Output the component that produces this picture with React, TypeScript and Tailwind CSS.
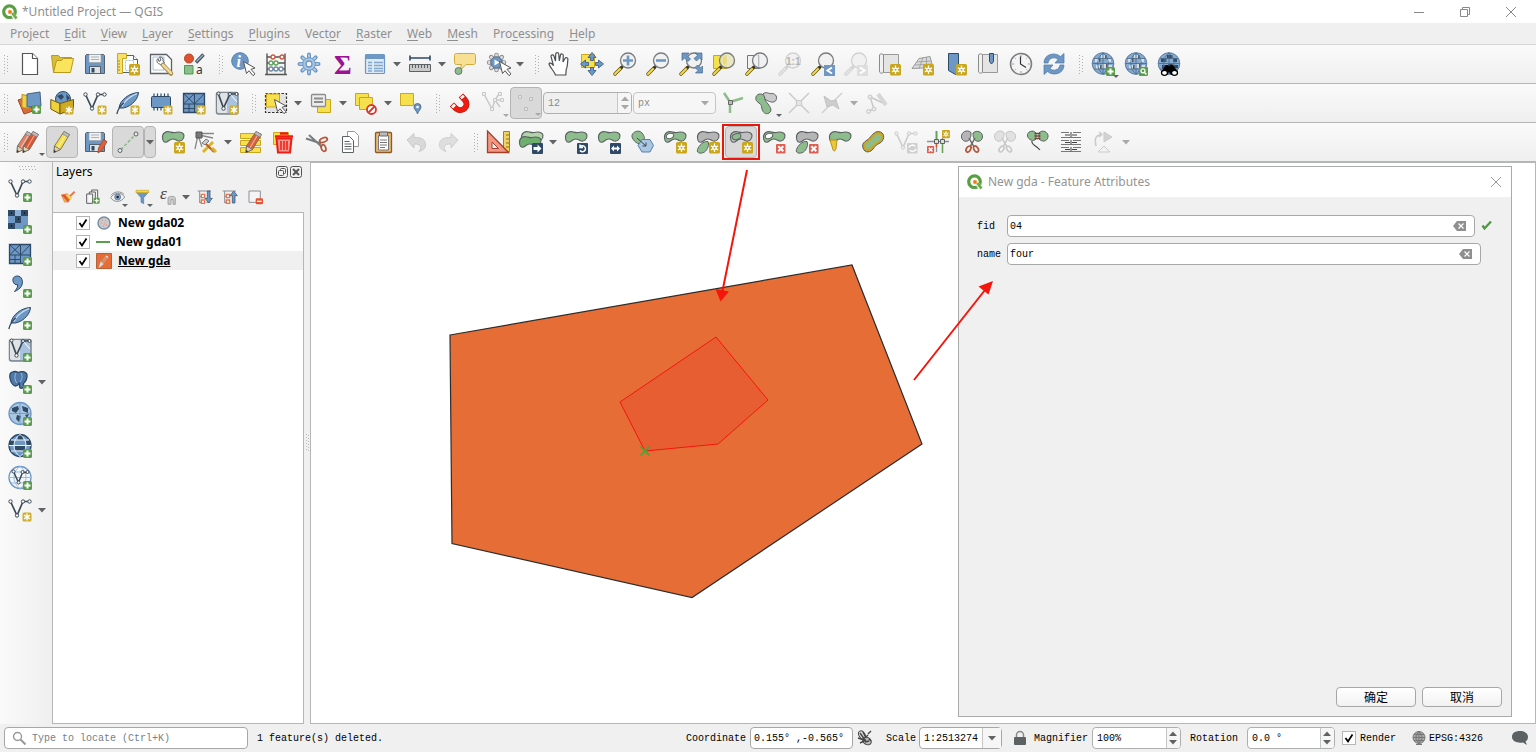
import React, { ReactNode } from "react";

/* ---------- shared icon parts ---------- */

const GREEN = "#8dbd8c";
const GREY = "#d2d2d2";
const LINE = "#5c6164";
const BLUE = "#6d97c4";
const NAVY = "#2f4a66";

const Star = ({ x = 13, y = 12 }: { x?: number; y?: number }) => (
  <g transform={`translate(${x} ${y})`}>
    <rect width="11" height="11.5" rx="1.5" fill="#c9a61c" />
    <path d="M5.5 1.6v8.3M1.9 3.7l7.2 4.2M9.1 3.7L1.9 7.9" stroke="#fff" strokeWidth="1.3" />
    <circle cx="5.5" cy="5.8" r="2.2" fill="#fff" />
    <circle cx="5.5" cy="5.8" r="1" fill="#c9a61c" />
  </g>
);

const Snow = ({ x = 14.5, y = 14.5 }: { x?: number; y?: number }) => (
  <g transform={`translate(${x} ${y})`}>
    <rect width="9" height="9" rx="1.5" fill="#cfae2c" />
    <path d="M4.5 1v7M1.5 2.7l6 3.6M7.5 2.7l-6 3.6" stroke="#fff" strokeWidth="1.4" />
  </g>
);

const Plus = ({ x = 15, y = 15 }: { x?: number; y?: number }) => (
  <g transform={`translate(${x} ${y})`}>
    <rect width="9" height="9" rx="1.5" fill="#5a9e4b" />
    <path d="M4.5 1.5v6M1.5 4.5h6" stroke="#fff" strokeWidth="2" />
  </g>
);

const RedX = ({ x = 14, y = 14 }: { x?: number; y?: number }) => (
  <g transform={`translate(${x} ${y})`}>
    <rect width="9.5" height="9.5" rx="1" fill="#dc5f52" />
    <path d="M2.3 2.3l5 5M7.3 2.3l-5 5" stroke="#fff" strokeWidth="2" />
  </g>
);

const Dark = ({ children }: { children: ReactNode }) => (
  <g transform="translate(13 13)">
    <rect width="11" height="11" rx="1" fill={NAVY} />
    {children}
  </g>
);

const Cursor = ({ x = 11, y = 9 }: { x?: number; y?: number }) => (
  <path
    transform={`translate(${x} ${y})`}
    d="M.5.5l3 12 2.5-2.8 4 5 2-1.800-4-4.600 4-1.300z"
    fill="#fff"
    stroke="#555"
    strokeWidth="1"
  />
);

const Blob = ({ fill = GREEN, stroke = LINE }: { fill?: string; stroke?: string }) => (
  <path
    d="M1.500 8C1 3 5 1 8.500 1.800c2 .5 3.500 1.200 5.500.7 3-.8 8.500-.8 9 3 .3 4-3.500 6.500-6.500 5.200-2.500-1.200-3.500-2.200-6-1.500-2.500.5-3.500 3-6 3C2.500 12.200 1.700 10 1.500 8z"
    fill={fill}
    stroke={stroke}
    strokeWidth="1.100"
  />
);

const Leaf = ({ fill = GREEN }: { fill?: string }) => (
  <path d="M12 11.500c1.500 3-.500 8.500-3.500 10.500s-8.500 1.500-7-2.500 5.500-8.500 10.500-8z" fill={fill} stroke={LINE} />
);

const Lens = ({ muted = false, glass = "#eef0ee" }: { muted?: boolean; glass?: string }) => (
  <g>
    <path d="M2 22l6-6" stroke={muted ? GREY : "#6b5c20"} strokeWidth="3.600" strokeLinecap="round" />
    <path d="M2 22l5-5" stroke={muted ? "#e2e2e2" : "#f3da4a"} strokeWidth="2" strokeLinecap="round" />
    <path d="M8 16l2-2" stroke={muted ? GREY : "#333"} strokeWidth="2.600" />
    <circle cx="15" cy="8.500" r="7.500" fill={glass} fillOpacity="0.85" stroke={muted ? GREY : "#777c7f"} strokeWidth="1.300" />
  </g>
);

const Pencil = ({ fill = "#d9603b", dx = 0 }: { fill?: string; dx?: number }) => (
  <g transform={`translate(${dx} 0)`}>
    <path d="M14 1.500l5.500 3-9 15L4 22.500l.500-6.500z" fill={fill} stroke="#7d6a55" strokeWidth=".9" />
    <path d="M16.500 3.500l-9 15" stroke="#fff" strokeOpacity=".45" strokeWidth="1.300" />
    <path d="M14 1.500l5.500 3-1.500 2.600-5.500-3z" fill="#b9bdc0" stroke="#777" strokeWidth=".6" />
    <path d="M4.500 16l6 3.500L4 22.500z" fill="#e3d3b0" stroke="#666" strokeWidth=".8" />
    <path d="M4.200 20l2 1.200-2.400 1.600z" fill="#333" />
  </g>
);

const Floppy = () => (
  <g>
    <path d="M3.500 2.500h17l1 1v18h-19v-18z" fill={BLUE} stroke="#56606b" />
    <path d="M6 2.500h12v8H6z" fill="#f2f2f2" stroke="#9aa3ab" strokeWidth=".7" />
    <path d="M8 5h8M8 7.500h8" stroke="#a9b0b5" />
    <path d="M6.500 14.500h11v7h-11z" fill="#dfe3e6" stroke="#56606b" />
    <path d="M8.500 16h3v4.500h-3z" fill={NAVY} />
  </g>
);

const VNodes = ({ color = "#3c4a57", fill = "#fff" }: { color?: string; fill?: string }) => (
  <g stroke={color} fill={fill}>
    <path d="M2.500 3.500l6.500 14 6-14h7" fill="none" strokeWidth="1.700" />
    <circle cx="2.500" cy="3.500" r="1.700" />
    <circle cx="9" cy="17.500" r="1.700" />
    <circle cx="15" cy="3.500" r="1.700" />
    <circle cx="21.500" cy="3.500" r="1.700" />
  </g>
);

const Feather = () => (
  <g>
    <path d="M3 17C4 9 13 2 22.500 1.500c0 5-5.500 13.500-15 15.500z" fill={BLUE} stroke={NAVY} />
    <path d="M6 15.500C9 9 15 5 21 2.500" stroke="#cfe0f0" strokeWidth="1.300" fill="none" />
    <path d="M.8 23c1-4 3-8 7-11" stroke={NAVY} strokeWidth="1.300" fill="none" />
  </g>
);

const Mesh = () => (
  <g>
    <path d="M1.500 2.500h21v19h-21z" fill={BLUE} stroke={NAVY} strokeWidth="1.300" />
    <path d="M12.500 2.500v19M1.500 13h21M12.500 13l10-10.500M1.500 2.500l11 10.500M12.500 2.500L1.500 13M1.500 17.500h11M7 13v8.500" stroke={NAVY} strokeWidth="1" fill="none" />
  </g>
);

const VTile = () => (
  <g>
    <rect x="1.500" y="1.500" width="21.500" height="21.500" rx="2" fill="#a9c3df" stroke="#7e868c" strokeWidth="1.500" />
    <path d="M2 2h10v20H4c-1 0-2-1-2-2z" fill="#dfe3e6" />
    <path d="M3 2l5.500 15L15 3h7" stroke="#3c4a57" strokeWidth="1.700" fill="none" />
    <path d="M15 3l7 8" stroke="#fff" strokeWidth="1" />
    <g fill="#fff" stroke="#3c4a57"><circle cx="3.500" cy="2.500" r="1.500" /><circle cx="8.500" cy="17.500" r="1.700" /><circle cx="15" cy="3" r="1.500" /><circle cx="21.500" cy="3" r="1.500" /></g>
  </g>
);

const Globe = ({ land = "#d9dcdf" }: { land?: string }) => (
  <g>
    <circle cx="12" cy="11.500" r="10.800" fill="#85aad2" stroke="#5f7f9f" />
    <path d="M4 6h4v4H4zM10 3h4v4h-4zM16 6h4v4h-4zM5 13h4v4H5zM11 12h4v4h-4zM17 13h4v3h-4z" fill={land} />
    <path d="M8 6h1.500v4H8zM14 3h1.500v4H14zM9 13h1.500v4H9zM15 12h1.500v4H15z" fill="#555d66" />
    <path d="M1.500 11.500h21M3 6.500h18M3 17h18M12 .8v21.400M12 .8C5 6 5 17 12 22.200M12 .8c7 5.200 7 16.200 0 21.400" fill="none" stroke="#4f6f90" strokeWidth=".9" />
  </g>
);

const Hatch = ({ x = 1, y = 1 }: { x?: number; y?: number }) => (
  <path transform={`translate(${x} ${y})`} d="M0 0h13v12H0z" fill="#f7e04e" stroke="#c9a61c" />
);

/* ---------- icons, drawn on a 24-unit grid ---------- */

const icons: Record<string, ReactNode> = {
  new: (
    <g fill="#fff" stroke="#555" strokeWidth="1.200">
      <path d="M5.500 1.500h10l5 5v16h-15z" />
      <path d="M15.500 1.500v5h5" />
    </g>
  ),
  open: (
    <g stroke="#b99a1b">
      <path d="M1.500 3.500h7l2 2h11v5h-14l-4 10z" fill="#d9bd3a" />
      <path d="M6.500 8.500h5l2-2h10l-3 14h-17z" fill="#f9e45b" />
    </g>
  ),
  save: <Floppy />,
  layout: (
    <g>
      <path d="M3.500 3.500h14l4 4v13h-18z" fill="#fff" stroke={LINE} />
      <path d="M17.500 3.500v4h4" fill="#fff" stroke={LINE} />
      <path d="M1.500 1.500h9v5h-4v15h-5z" fill="#f7df6a" stroke="#c9a61c" />
      <path d="M2 9h2M2 12h2M2 15h2M2 18h2" stroke="#8d6a17" strokeWidth=".8" />
      <path d="M9.500 8.500h8v10h-8z" fill="#fff" stroke="#a9c0da" strokeDasharray="2 1" />
      <Star />
    </g>
  ),
  layoutManager: (
    <g>
      <path d="M1.500 2.500h16l5 5v14h-21z" fill="#fff" stroke={LINE} strokeWidth="1.300" />
      <path d="M4 5h11v13H4z" fill="none" stroke="#a9c0da" />
      <path d="M9 6.500c-2 2-1 5 1.500 5.500l2 1.500 3-2.500-1.500-2c.5-2.500-1-4.500-3.500-4l1.500 3-2 1.500z" fill="#fff" stroke={LINE} />
      <path d="M14 13l8 8.500" stroke="#a98b4a" strokeWidth="4.500" strokeLinecap="round" />
      <path d="M14 13l8 8" stroke="#ecd9a0" strokeWidth="2.500" strokeLinecap="round" />
    </g>
  ),
  style: (
    <g>
      <circle cx="7" cy="6.500" r="4.500" fill="#e0522d" stroke="#b04428" />
      <path d="M14 10.500l7.500-8" stroke="#46525e" strokeWidth="3.500" />
      <path d="M14.500 9.500l6.500-6.500" stroke="#9ab4cf" strokeWidth="1.200" />
      <path d="M2.500 13.500h8.500v8.500H2.500z" fill={GREEN} stroke="#4c9a4b" />
      <text x="14" y="22" fontSize="12" fontFamily="Noto Sans" fill="#333">a</text>
    </g>
  ),
  identify: (
    <g>
      <circle cx="9" cy="9" r="8.300" fill={BLUE} stroke="#5680ad" />
      <text x="5.500" y="14.500" fontSize="16" fontStyle="italic" fontWeight="bold" fontFamily="Liberation Serif" fill="#fff">i</text>
      <Cursor x={12} y={9} />
    </g>
  ),
  abacus: (
    <g fill="none">
      <path d="M3 1.500v21M21 1.500v21M1 22.500h22M3 5h18M3 11h18M3 17h18" stroke="#555" strokeWidth="1.400" />
      <g fill="#fff" strokeWidth="1.300">
        <g stroke="#d2553a"><circle cx="9" cy="5" r="2" /><circle cx="18" cy="5" r="2" /></g>
        <g stroke="#60a45a"><circle cx="7" cy="11" r="2" /><circle cx="12" cy="11" r="2" /></g>
        <g stroke="#7088a0"><circle cx="7" cy="17" r="2" /><circle cx="12" cy="17" r="2" /><circle cx="17" cy="17" r="2" /></g>
      </g>
    </g>
  ),
  gear: (
    <g>
      <g stroke="#6d97c4" strokeWidth="4" strokeLinecap="round">
        <path d="M12 2.500v19M2.500 12h19M5.300 5.300l13.400 13.400M18.700 5.300L5.300 18.700" />
      </g>
      <g stroke="#a9c6e3" strokeWidth="2" strokeLinecap="round">
        <path d="M12 3v18M3 12h18M5.800 5.800l12.400 12.400M18.200 5.800L5.800 18.200" />
      </g>
      <circle cx="12" cy="12" r="6.300" fill="#a9c6e3" stroke={BLUE} />
      <circle cx="12" cy="12" r="3" fill="#f5f5f5" stroke={BLUE} strokeWidth="1.300" />
    </g>
  ),
  sigma: (
    <text x="4" y="21.500" fontSize="27" fontWeight="bold" fontFamily="Liberation Serif" fill="#9b1292">Σ</text>
  ),
  table: (
    <g>
      <rect x="2.500" y="2.500" width="19" height="19" rx="1" fill="#dce9f6" stroke={BLUE} strokeWidth="1.200" />
      <path d="M3 3h18v4H3z" fill={BLUE} />
      <path d="M5 10.500h4M5 13.500h4M5 16.500h4M5 19h4M11 10.500h9M11 13.500h9M11 16.500h9M11 19h9" stroke="#85a8cf" strokeWidth="1.300" />
    </g>
  ),
  measure: (
    <g>
      <path d="M2 6h20M2 3.500v5M22 3.500v5" stroke={NAVY} strokeWidth="1.600" />
      <path d="M1.500 12.500h21v7h-21z" fill="#c9c9c9" stroke={LINE} />
      <path d="M4.500 13v3M7.500 13v3M10.500 13v3M13.500 13v3M16.500 13v3M19.500 13v3" stroke={LINE} />
    </g>
  ),
  tip: (
    <g>
      <path d="M3.500 1.500h17c1.500 0 2 1 2 2v7c0 1-.5 2-2 2H13l-6 6 1.500-6h-5c-1.500 0-2-1-2-2v-7c0-1 .5-2 2-2z" fill="#f7df93" stroke="#d0a93c" />
      <circle cx="5.500" cy="19" r="3.500" fill={GREEN} stroke={LINE} strokeWidth=".8" />
    </g>
  ),
  action: (
    <g>
      <g stroke="#888" strokeWidth="4.500" strokeLinecap="round">
        <path d="M10.500 3v15M3 10.500h15M5.200 5.200l10.600 10.600M15.800 5.200L5.200 15.800" />
      </g>
      <g stroke="#dcdcdc" strokeWidth="2.800" strokeLinecap="round">
        <path d="M10.500 3v15M3 10.500h15M5.200 5.200l10.600 10.600M15.800 5.200L5.200 15.800" />
      </g>
      <circle cx="10.500" cy="10.500" r="5.800" fill={BLUE} stroke="#5b6b7a" />
      <path d="M8.500 7.500l5 3-5 3z" fill="#fff" />
      <Cursor x={13} y={9} />
    </g>
  ),
  pan: (
    <path
      d="M8.500 23C7.500 19.500 3 15.500 2 12c.5-1.800 2.500-1 4.500 1.700L4 4.500C3.800 2.700 6.200 2.300 6.900 4l1.600 5L8.700 2c.3-1.800 2.700-1.800 3 0l.6 6.800L13.500 3c.6-1.700 2.800-1.200 2.800.6L16 10l2-3.500c1-1.600 3.200-.8 2.900 1-.7 4 .1 6.500-1.700 10l-.4 5.500z"
      fill="#fff"
      stroke="#4a4f52"
      strokeWidth="1.200"
    />
  ),
  panSel: (
    <g>
      <path d="M1.500 2.500h13v13h-13z" fill="#f7e04e" stroke="#c9a61c" />
      <path d="M12 .5l4 5h-2.500v3h-3v-3H8zM12 23.500l4-5h-2.500v-3h-3v3H8zM.5 12l5-4v2.500h3v3h-3V16zM23.500 12l-5-4v2.500h-3v3h3V16z" fill={BLUE} stroke="#3e628a" strokeWidth=".9" />
    </g>
  ),
  zoomIn: <g><Lens /><path d="M15 3.500v10M10 8.500h10" stroke={BLUE} strokeWidth="2.600" /></g>,
  zoomOut: <g><Lens /><path d="M10 8.500h10" stroke={BLUE} strokeWidth="2.600" /></g>,
  zoomFull: (
    <g>
      <Lens />
      <path d="M3 1h7L8 3.500l3.500 3.500L9 9.500 5.500 6 3 8.500zM23 1v7l-2.500-2L17.500 9 15 6.500 18.500 3.500 16 1zM23.500 21h-7l2.500-2.500-3-3 2.500-2.500 3 3L23.500 14z" fill={BLUE} stroke="#47698e" strokeWidth=".7" />
    </g>
  ),
  zoomSel: (
    <g>
      <path d="M1.500 3.500h13v13h-13z" fill="#f7e04e" stroke="#c9a61c" />
      <Lens glass="#e9e4b8" />
      <path d="M11 5h3v7h-3z" fill="#f1dc62" />
    </g>
  ),
  zoomLayer: (
    <g>
      <path d="M2.500 3.500h12v13h-12z" fill="#f2f2f2" stroke="#777" />
      <Lens />
      <path d="M13.500 2.500v12" stroke="#b5b8ba" />
    </g>
  ),
  zoomNative: (
    <g>
      <Lens muted />
      <text x="8" y="12.500" fontSize="10" fontWeight="bold" fontFamily="Liberation Sans" fill="#b4b4b4">1:1</text>
    </g>
  ),
  zoomLast: (
    <g>
      <Lens />
      <path d="M13 13h11v11H13z" fill={BLUE} />
      <path d="M21 15.500l-4.500 3 4.500 3" stroke="#fff" strokeWidth="2" fill="none" />
    </g>
  ),
  zoomNext: (
    <g>
      <Lens muted />
      <path d="M13 13h11v11H13z" fill="#dedede" />
      <path d="M16 15.500l4.500 3-4.500 3" stroke="#fff" strokeWidth="2" fill="none" />
    </g>
  ),
  newMap: (
    <g>
      <path d="M6.500 2.500h15v18h-15z" fill="#e4e4e4" stroke="#999" />
      <path d="M2.500 3c0-1.500 4-1.500 4 0v16c0 3-4 3-4 0z" fill="#f1f1f1" stroke="#8b8b8b" />
      <Star />
    </g>
  ),
  new3d: (
    <g stroke="#999">
      <path d="M9 6.500l11-2 3 11-21 1z" fill="#dadada" />
      <path d="M7 10l14-1M5 13l17-1M13 5.500l-4 11M16.500 5v11" fill="none" strokeWidth=".8" />
      <g stroke="none"><Star /></g>
    </g>
  ),
  bookmarkNew: (
    <g>
      <path d="M5.500 1.500h10v19l-3 2-7-4z" fill={BLUE} stroke={NAVY} />
      <Star />
    </g>
  ),
  bookmarks: (
    <g>
      <path d="M6.500 2.500h15v18h-15z" fill="#e4e4e4" stroke="#999" />
      <path d="M2.500 3c0-1.500 4-1.500 4 0v16c0 3-4 3-4 0z" fill="#f1f1f1" stroke="#8b8b8b" />
      <path d="M13.500 1.500h4v8l-2 2.500-2-2.500z" fill={BLUE} stroke={NAVY} />
    </g>
  ),
  clock: (
    <g>
      <circle cx="12" cy="12" r="10.500" fill="#f4f4f4" stroke="#777c7f" strokeWidth="1.500" />
      <path d="M12 3v2M12 19v2M3 12h2M19 12h2M5.600 5.600l1 1M18.400 5.600l-1 1M5.600 18.400l1-1M18.400 18.400l-1-1" stroke="#999" />
      <path d="M11.500 4.500V12l5.500 3.500" stroke="#333" strokeWidth="1.200" fill="none" />
    </g>
  ),
  refresh: (
    <g fill={BLUE} stroke="#4f79a8" strokeWidth=".7">
      <path d="M2 11C2 2 13-.5 18.500 4.500L22 1.500V11h-9l3-3.500c-3-3-9-2-10 3.500z" />
      <path d="M22 13c0 9-11 11.500-16.500 6.500L2 22.500V13h9l-3 3.500c3 3 9 2 10-3.500z" />
    </g>
  ),
  globeAdd: <g><Globe /><Plus /></g>,
  globeSearch: (
    <g>
      <Globe />
      <rect x="15" y="15" width="9" height="9" rx="1" fill="#5a9e4b" />
      <circle cx="19" cy="18.800" r="2" fill="none" stroke="#fff" strokeWidth="1.200" />
      <path d="M20.500 20.500l2 2" stroke="#fff" strokeWidth="1.500" />
    </g>
  ),
  globeFind: (
    <g>
      <Globe land="#2f4a66" />
      <path d="M4 20l5-7h2l1 1.500 1-1.500h3l5 7-3 3h-4l-2-3-2 3H6z" fill="#000" />
      <ellipse cx="7.500" cy="20.800" rx="3" ry="2.500" fill="#fff" stroke="#000" strokeWidth="1.300" />
      <ellipse cx="17.500" cy="20.800" rx="3" ry="2.500" fill="#fff" stroke="#000" strokeWidth="1.300" />
    </g>
  ),

  /* data sources and selection */
  dataSource: (
    <g>
      <path d="M1 9l9-3 6 14-9 3z" fill="#dc6a3d" stroke="#a24a26" />
      <path d="M5 3.500l10 2-3 12-7-1z" fill="#f1cf44" stroke="#b9901b" />
      <path d="M10 3l13-2 1 14-14 1z" fill={BLUE} stroke="#47627e" />
      <Plus x={15} y={14} />
    </g>
  ),
  geopackage: (
    <g>
      <circle cx="13" cy="8" r="7.500" fill={BLUE} stroke={NAVY} />
      <path d="M7 5l5-2 2 3-3 3zM16 3l4 4-3 3z" fill={NAVY} />
      <path d="M.8 8.500L10 12.500v10.500L.8 18z" fill="#f0d23c" stroke="#6e5a12" />
      <path d="M10 12.500l13.500-4V18L10 23z" fill="#cfa920" stroke="#6e5a12" />
      <Snow />
    </g>
  ),
  shapefile: <g><VNodes /><Snow /></g>,
  spatialite: <g><Feather /><Snow /></g>,
  memory: (
    <g>
      <path d="M5 2.500v17M8.500 2.500v17M12 2.500v17M15.500 2.500v17M19 2.500v17" stroke={NAVY} strokeWidth="1.200" />
      <rect x="2.500" y="5.500" width="19" height="11" rx="1" fill={BLUE} stroke={NAVY} />
      <Snow />
    </g>
  ),
  mesh: <g><Mesh /><Snow /></g>,
  vtile: <g><VTile /><Snow /></g>,
  select: (
    <g>
      <path d="M1.500 2.500h21v19h-21z" fill="#e3e3e3" stroke="#333" strokeDasharray="2.500 1.500" strokeWidth="1.200" />
      <path d="M2.500 3h13v13h-13z" fill="#f7e04e" stroke="#c9a61c" />
      <Cursor x={10} y={8} />
    </g>
  ),
  selectForm: (
    <g>
      <path d="M8.500 8.500h13v13h-13z" fill="#f7e04e" stroke="#c9a61c" />
      <rect x="2.500" y="3.500" width="14" height="12" rx="1" fill="#ececec" stroke="#8d8d8d" strokeWidth="1.300" />
      <path d="M5 7.500h9M5 11h9" stroke="#8d8d8d" strokeWidth="2" />
    </g>
  ),
  deselect: (
    <g>
      <Hatch x={1.500} y={2.500} />
      <Hatch x={5.500} y={6.500} />
      <circle cx="17.500" cy="18.500" r="4.500" fill="#fff" stroke="#e0342b" strokeWidth="1.800" />
      <path d="M14.500 21.500l6-6" stroke="#e0342b" strokeWidth="1.800" />
    </g>
  ),
  selectLoc: (
    <g>
      <Hatch x={1.500} y={2.500} />
      <path d="M18.500 23c-1-3.500-3.500-4.500-3.500-7a3.500 3.500 0 017 0c0 2.500-2.500 3.500-3.500 7z" fill={BLUE} stroke="#47627e" strokeWidth=".8" />
      <circle cx="18.500" cy="16" r="1.300" fill="#fff" />
    </g>
  ),
  magnet: (
    <g fill="none">
      <path d="M13 4.500l4 4.500c5 6-3 13.500-9 8.500l-4-4" stroke="#a8281c" strokeWidth="6" />
      <path d="M13 4.500l4 4.500c5 6-3 13.500-9 8.500l-4-4" stroke="#f01a10" strokeWidth="4.600" />
      <path d="M13.500 5l1.700 2M4.500 14l2 2" stroke="#fff" strokeWidth="4" />
    </g>
  ),
  snapType: (
    <g stroke="#c8c8c8" fill="#eee">
      <path d="M3 3l8 15 3-9h7M14 9l5 7M14 9l4-6" fill="none" strokeWidth="1.500" />
      <path d="M1.500 1.500h3v3h-3zM9.500 16.500h3v3h-3zM19.500 7.500h3v3h-3zM17.500 1.500h3v3h-3zM12.500 7.500h3v3h-3z" />
    </g>
  ),
  snapVertex: (
    <g stroke="#bdbdbd" fill="#e3e3e3">
      <path d="M4.500 4.500h3v3h-3zM15.500 6.500h3v3h-3zM10.500 16.500h3v3h-3z" />
    </g>
  ),
  topology: (
    <g>
      <path d="M3 2l6 9v11M9 11l13-4" stroke={GREEN} strokeWidth="2.500" fill="none" />
      <path d="M7.500 9.500h4v4h-4z" fill="#bbb" stroke="#666" />
    </g>
  ),
  overlap: (
    <g stroke={LINE}>
      <path d="M9 3c3-3 6 0 8-.5s6 1 5.500 5-4 4-7 3-7-3-6.500-7.500z" fill="#c9c9c9" />
      <path d="M2 6c1-4 8-4 8.500 0s1 4 3.500 7 4.500 7 1 9-6-.5-7-4 0-4-3-6-3.500-3.500-3-6z" fill={GREEN} />
    </g>
  ),
  intersect: (
    <g stroke="#cbcbcb" strokeWidth="1.500" fill="#e5e5e5">
      <path d="M2 2l20 20M22 2L2 22" />
      <path d="M9.500 9.500h5v5h-5z" strokeWidth="1.200" />
    </g>
  ),
  selfSnap: (
    <g>
      <path d="M2 22L22 2" stroke="#cfcfcf" strokeWidth="1.500" />
      <path d="M4 5l7 5 5-1 3 9-6-4-6 2z" fill="#cdcdcd" stroke="#c2c2c2" />
    </g>
  ),
  trace: (
    <g stroke="#c8c8c8" fill="#e9e9e9">
      <path d="M4 20l5-2 -4-12 13 6" fill="none" strokeWidth="1.500" />
      <path d="M13 3l8 11" strokeWidth="4" stroke="#d6d6d6" />
      <circle cx="3.500" cy="20.500" r="2" /><circle cx="9" cy="18" r="2" /><circle cx="5" cy="6" r="2" />
    </g>
  ),

  /* editing */
  edits: <g><Pencil dx={-4} fill="#e0826a" /><Pencil dx={2} fill="#d9552f" /></g>,
  toggleEdit: <Pencil fill="#f3de4c" />,
  saveEdits: (
    <g>
      <Floppy />
      <path d="M20.500 9.500l3.500 2-5 9-4 2.500.5-5z" fill="#e0603b" stroke="#8c4a34" strokeWidth=".8" />
    </g>
  ),
  segment: (
    <g>
      <path d="M5 19.500L19 5" stroke={GREEN} strokeWidth="1.700" strokeDasharray="3 2" />
      <circle cx="4" cy="20.500" r="2" fill="#eee" stroke={LINE} /><circle cx="20" cy="4" r="2" fill="#eee" stroke={LINE} />
    </g>
  ),
  addPolygon: <g><Blob /><Star /></g>,
  vertexTool: (
    <g>
      <path d="M4 5L1 19M4 5l4 12M4 3.500h16M5 5l14 3" stroke="#888" strokeWidth="1.300" fill="none" />
      <path d="M2 2h6v6H2z" fill="#777" stroke="#555" />
      <path d="M19 12L9 22" stroke="#d9b427" strokeWidth="3" />
      <path d="M10 12l10 10" stroke="#c0572e" strokeWidth="2" />
      <path d="M8 13l4-4 3 2-4 4z" fill="#ccc" stroke="#666" strokeWidth=".8" />
      <path d="M18 18l4 4" stroke="#d9b427" strokeWidth="3" />
    </g>
  ),
  modifyAttr: (
    <g>
      <path d="M1.500 3.500h20v5h-20zM1.500 10.500h20v5h-20zM1.500 17.500h20v5h-20z" fill="#f7e04e" stroke="#c9a61c" />
      <Pencil dx={3} />
    </g>
  ),
  trash: (
    <g>
      <path d="M1.500 2.500h15v12h-15z" fill="#f7e04e" stroke="#c9a61c" />
      <path d="M3 6.500h18M8 3.500h8" stroke="#ee1c12" strokeWidth="2.500" />
      <path d="M4.500 8.500h15l-1.500 14H6z" fill="#f59a90" stroke="#ee1c12" strokeWidth="2" />
      <path d="M9 11v9M12 11v9M15 11v9" stroke="#ee1c12" strokeWidth="1.500" />
    </g>
  ),
  cut: (
    <g fill="none">
      <path d="M1 8.500l15 5M4 5l13 12" stroke="#777c7f" strokeWidth="2" />
      <ellipse cx="18.500" cy="10" rx="4" ry="2.200" transform="rotate(-20 18.500 10)" stroke="#b5573a" strokeWidth="1.700" />
      <ellipse cx="18.500" cy="18" rx="2.200" ry="3.500" transform="rotate(-20 18.500 18)" stroke="#b5573a" strokeWidth="1.700" />
    </g>
  ),
  copy: (
    <g fill="#fff" stroke={LINE}>
      <path d="M9.500 1.500h7l4 4v11h-11z" stroke="#999" />
      <path d="M4.500 6.500h7l4 4v12h-11z" />
      <path d="M6.500 11.500h5M6.500 14h7M6.500 16.500h7M6.500 19h7" />
    </g>
  ),
  paste: (
    <g>
      <rect x="4.500" y="2.500" width="16" height="20" rx="1" fill="#e8bb7a" stroke="#8d5a26" strokeWidth="1.300" />
      <path d="M7.500 5.500h10v14.500h-10z" fill="#fff" stroke="#777" />
      <path d="M8.500 2h8v4h-8z" fill="#bbb" stroke="#666" />
      <path d="M9 10h7M9 12.500h7M9 15h7M9 17.500h5" stroke="#777" />
    </g>
  ),
  undo: <path d="M3 10l7-6.500v4c7-.5 12 2 11.500 8-.3 3-2.500 5-6.500 6 4-4.500 1-8-5-7.500v4z" fill="#d9d9d9" stroke="#cacaca" />,
  redo: <path d="M21 10l-7-6.500v4c-7-.5-12 2-11.500 8 .3 3 2.500 5 6.500 6-4-4.500-1-8 5-7.500v4z" fill="#dedede" stroke="#cfcfcf" />,

  /* advanced digitizing */
  advanced: (
    <g>
      <path d="M17.500 1.500h6v20h-6z" fill="#f0d264" stroke="#b07a1b" />
      <path d="M20 5h3M20 9h3M20 13h3M20 17h3" stroke="#8d6a17" />
      <path d="M1.500 1L1.500 22.500h21z" fill="#f39684" stroke="#a0412b" strokeWidth="1.300" />
      <path d="M6 12v6.500h6.500z" fill="#f6f6f6" stroke="#a0412b" />
    </g>
  ),
  move: (
    <g>
      <g transform="translate(1 0)"><Blob fill="#b1d3a8" /></g>
      <g transform="translate(-1 5)"><Blob fill="#6faf6d" /></g>
      <Dark><path d="M1.500 4h4V1.500l4 4-4 4V7h-4z" fill="#fff" /></Dark>
    </g>
  ),
  rotate: <g><Blob /><Dark><path d="M3.500 3.500a3 3 0 11-.5 4M3 1.500v3h3" fill="none" stroke="#fff" strokeWidth="1.500" /></Dark></g>,
  scale: <g><Blob /><Dark><path d="M1 5.500l3-3v2h3v-2l3 3-3 3v-2H4v2z" fill="#fff" /></Dark></g>,
  simplify: (
    <g>
      <path d="M2 7C1 2 9-1 12 3s3 5 1 9-9 1-11-5z" fill={GREEN} stroke={LINE} />
      <path d="M12 9.500h8l3.500 6-3.500 6.500h-8l-4-6.500z" fill="#a9c6e3" stroke="#5680ad" />
      <path d="M7 8l9 8m0-3.500V16h-3.500" stroke="#444" fill="none" />
    </g>
  ),
  addRing: <g><Blob /><ellipse cx="7" cy="6" rx="3.800" ry="2.500" transform="rotate(-20 7 6)" fill="#fff" stroke={LINE} /><Star /></g>,
  addPart: <g><Blob fill="#b5b5b5" /><Leaf /><Star /></g>,
  fillRing: <g><Blob fill="#c0c0c0" /><ellipse cx="7.500" cy="6.500" rx="4.500" ry="3" transform="rotate(-20 7.500 6.500)" fill={GREEN} stroke={LINE} /><Star /></g>,
  deleteRing: <g><Blob /><ellipse cx="7" cy="6" rx="3.800" ry="2.500" transform="rotate(-20 7 6)" fill="#fff" stroke={LINE} /><RedX /></g>,
  deletePart: <g><Blob fill="#b5b5b5" /><Leaf /><RedX /></g>,
  reshape: <g><Blob /><path d="M2 10h7l-1 8c-.5 4-3 4-3.500 0z" fill="#e9c83c" stroke="#b9901b" /></g>,
  offset: (
    <g>
      <path d="M2 18c-2-6 4-7 6.500-10s6-8 11-6 3.500 9-.5 11-5 3-7 6-8 5-10-1z" fill="#cda61d" stroke={LINE} />
      <path d="M4.500 17c-1-4 4-5 6-7.500s5-6.500 8-5 2 5-1 6.500-5 3.500-7 6-5 3-6 0z" fill={GREEN} />
    </g>
  ),
  reverse: (
    <g>
      <VNodes color="#cdcdcd" fill="#eee" />
      <rect x="13" y="13" width="10.500" height="10.500" rx="1" fill="#cfcfcf" />
      <path d="M15 17.500c1-3 5-3 6-1M22 19c-1 3-5 3-6 1" stroke="#fff" strokeWidth="1.500" fill="none" />
    </g>
  ),
  trim: (
    <g>
      <path d="M9.500 1v9" stroke="#60a45a" strokeWidth="2" />
      <path d="M0 11.500h22M9.500 13v9M15.500 8v15" stroke="#85929d" strokeWidth="1.300" />
      <path d="M9.500 13v4" stroke="#d2553a" strokeWidth="1.500" />
      <path d="M15.500 13v10" stroke="#60a45a" strokeWidth="1.300" />
      <path d="M7.500 9.500h4v4h-4zM13.500 9.500h4v4h-4z" fill="#ddd" stroke={LINE} />
      <g transform="translate(15 0) scale(.72)"><Star x={0} y={0} /></g>
      <g transform="translate(0 16) scale(.75)"><RedX x={0} y={0} /></g>
    </g>
  ),
  splitFeat: (
    <g>
      <path d="M11 2.500C7-1 1 2 1.500 7s6 5 7.500 3 2-3 2-7.500z" fill="#b5b5b5" stroke={LINE} />
      <path d="M13 3c4-3.500 10-1 9.500 4s-6 5-7.500 3-2-3-2-7z" fill={GREEN} stroke={LINE} />
      <path d="M9 8l5 9M15 8l-5 9" stroke="#666" strokeWidth="1.500" />
      <ellipse cx="8.500" cy="19" rx="2" ry="3.300" transform="rotate(35 8.500 19)" fill="none" stroke="#b5573a" strokeWidth="1.700" />
      <ellipse cx="16" cy="19" rx="2" ry="3.300" transform="rotate(-35 16 19)" fill="none" stroke="#b5573a" strokeWidth="1.700" />
    </g>
  ),
  splitPart: (
    <g fill="#e1e1e1" stroke="#c6c6c6">
      <path d="M11 2.500C7-1 1 2 1.500 7s6 5 7.500 3 2-3 2-7.500z" />
      <path d="M13 3c4-3.500 10-1 9.500 4s-6 5-7.500 3-2-3-2-7z" />
      <path d="M9 8l5 9M15 8l-5 9" strokeWidth="1.500" />
      <g fill="none" strokeWidth="1.500">
        <ellipse cx="8.500" cy="19" rx="2" ry="3.300" transform="rotate(35 8.500 19)" />
        <ellipse cx="16" cy="19" rx="2" ry="3.300" transform="rotate(-35 16 19)" />
      </g>
    </g>
  ),
  merge: (
    <g>
      <path d="M10 3C7-1 .500 2 1.500 6s6 6 8.500 3z" fill={GREEN} stroke={LINE} />
      <path d="M13 3c3-4 10-1 9 4s-6 5-9 2z" fill={GREEN} stroke={LINE} />
      <path d="M8.500 3.500h6M8.500 6h6M8.500 8.500h6" stroke="#6b4a3a" strokeWidth="1.300" />
      <path d="M6 11c-1 4 4 4 8 9" stroke="#444" strokeWidth="1.200" fill="none" />
    </g>
  ),
  mergeAttr: (
    <g stroke="#777">
      <path d="M2 2.500h8M14 2.500h8M2 7.500h20M2 10.500h8M14 10.500h8M2 14.500h20M2 17.500h8M14 17.500h8M2 21.500h20" strokeWidth="1.200" />
      <path d="M6 5h5M13 5h5M6 12.500h5M13 12.500h5M6 19.500h5M13 19.500h5M12 2v5M12 10v4M12 17v4" stroke="#444" />
    </g>
  ),
  rotateSym: (
    <g stroke="#cbcbcb" fill="#d2d2d2">
      <path d="M12 2v10l8-5z" />
      <path d="M6 22h12l-6-6z" fill="#f2f2f2" />
      <path d="M4 16C2 9 4 5 9 4.500M7 2l3 2.500-3 2.500" fill="none" strokeWidth="1.500" />
    </g>
  ),

  /* layer sources */
  addVector: <g><VNodes /><Plus /></g>,
  addRaster: (
    <g>
      <path d="M0 0h20v19H0z" fill={BLUE} />
      <path d="M0 0h7v6H0zM13 0h7v6h-7zM7 6h6v7H7zM0 13h7v6H0z" fill={NAVY} />
      <path d="M3 3h1M16 3h1M10 9h1M3 16h1" stroke="#111" strokeWidth="1.500" />
      <path d="M7 0h6v6H7z" fill="#8db0d6" />
      <Plus />
    </g>
  ),
  addMesh: <g><Mesh /><Plus /></g>,
  addCsv: (
    <g>
      <path d="M5 7c-1.500-5 7-7.500 9-1.500 1.500 5-1 9.500-7.500 12 2.500-3 3.500-5 3-7-2 .8-4-.8-4.500-3.500z" fill={BLUE} stroke={NAVY} />
      <Plus />
    </g>
  ),
  addSpatialite: <g><Feather /><Plus /></g>,
  addVtile: <g><VTile /><Plus /></g>,
  addPostgis: (
    <g>
      <path d="M2 4c1-3 6-3 8-1.500C13 1 18 1 19 5c.5 4-2 7-3.500 8.500v3.500c-1 2-4 1.500-4-.5v-4c-1 2-2 3.500-4 3.500C3 15 1 8 2 4z" fill="#4e79a8" stroke={NAVY} strokeWidth="1.300" />
      <path d="M8 3c-2 4-1 8 1 10M13 3c2 3 1 6-1 9" fill="none" stroke="#9dbbdc" />
      <Plus />
    </g>
  ),
  addWms: (
    <g>
      <circle cx="12" cy="11.500" r="11" fill="#a9c6e3" stroke={BLUE} strokeWidth="1.300" />
      <path d="M4 6l6-2 1 3-3 4-4-2zM14 4l6 2v5l-5-2zM9 13l4 1-2 6-3-3zM17 13l4-1-2 4z" fill={NAVY} />
      <path d="M1 11.500h22M12 .5v22" stroke={BLUE} strokeWidth=".8" />
      <Plus />
    </g>
  ),
  addWcs: (
    <g>
      <circle cx="12" cy="11.500" r="11" fill={BLUE} stroke={NAVY} strokeWidth="1.300" />
      <path d="M2 6.500h4v5H1zM10 1h5v5h-5zM18 6.500h4l1 5h-5zM7 11.500h10v5H7z" fill={NAVY} />
      <path d="M1 11.500h22M3 6h18M3 17h18M12 .5C4 6 4 17 12 22.500M12 .5c8 5.500 8 16.500 0 22" stroke="#eef4fa" strokeWidth="1" fill="none" />
      <Plus />
    </g>
  ),
  addWfs: (
    <g>
      <circle cx="12" cy="11.500" r="11" fill="#f2f7fc" stroke={BLUE} strokeWidth="1.300" />
      <path d="M1 11.500h22M3 6h18M3 17h18M12 .5C4 6 4 17 12 22.500M12 .5c8 5.500 8 16.500 0 22" stroke="#9dbbdc" strokeWidth="1" fill="none" />
      <path d="M5.500 5.500l5 11 4-10h5" fill="none" stroke="#3c4a57" strokeWidth="1.500" />
      <g fill="#fff" stroke="#3c4a57"><circle cx="5.500" cy="5.500" r="1.500" /><circle cx="10.500" cy="16.500" r="1.500" /><circle cx="14.500" cy="6" r="1.500" /><circle cx="19.500" cy="6" r="1.500" /></g>
      <Plus />
    </g>
  ),

  /* layer panel */
  brush: (
    <g>
      <path d="M2 9l9-2 6 6-5 7-3-1-2 1z" fill="#f0b93a" stroke="#e8744f" />
      <path d="M2 9l5-1 7 8-2 4z" fill="#e0563a" />
      <path d="M13 13l9-9" stroke="#e8744f" strokeWidth="3" />
      <path d="M11 9l6 6" stroke="#f6dc5c" strokeWidth="3" />
    </g>
  ),
  addGroup: (
    <g fill="#f4f4f4" stroke={LINE} strokeWidth="1.500">
      <path d="M10 1.500h9v15h-9z" /><path d="M6.500 4.500h9v15h-9z" /><path d="M2.500 7.500h9v14h-9z" />
      <g stroke="none"><Plus x={13} y={13} /></g>
    </g>
  ),
  eye: (
    <g>
      <path d="M1 13C6 5 17 4 22 12c-5 8-16 9-21 1z" fill="#f4f4f4" stroke="#8a9094" strokeWidth="1.500" />
      <path d="M2 9c5-6 14-6 19-1" fill="none" stroke="#8a9094" strokeWidth="1.500" />
      <circle cx="11.500" cy="12" r="4.500" fill="#7fa3cb" stroke="#5b6b7a" /><circle cx="11.500" cy="12" r="1.800" fill="#222" />
    </g>
  ),
  filter: (
    <g>
      <path d="M2 5h18l-7 8v9l-4-2v-7z" fill={BLUE} stroke="#4f79a8" />
      <path d="M1.500 2h19v3.500h-19z" fill="#f7d83c" stroke="#c9a61c" />
    </g>
  ),
  epsilon: (
    <g>
      <text x="0" y="15" fontSize="26" fontStyle="italic" fontFamily="Liberation Serif" fill="#444">ε</text>
      <path d="M12 23v-9c0-4 11-4 11 0v9h-3.500v-7h-3v7z" fill="#ccc" stroke="#888" />
    </g>
  ),
  expand: (
    <g>
      <path d="M1 3h20M4 3v18M4 11h5M4 20h5M14 20h6" stroke="#8a9094" strokeWidth="1.500" fill="none" />
      <path d="M6.500 8h5v5h-5zM6.500 16.500h5v5h-5z" fill="#fff" stroke="#e8744f" strokeWidth="2" />
      <path d="M15.500 3h4v11h3.500l-5.500 7-5.500-7h3.500z" fill={BLUE} stroke={NAVY} />
    </g>
  ),
  collapse: (
    <g>
      <path d="M1 3h20M4 3v18M4 11h5M4 20h5" stroke="#8a9094" strokeWidth="1.500" fill="none" />
      <path d="M6.500 8h5v5h-5zM6.500 16.500h5v5h-5z" fill="#fff" stroke="#e8744f" strokeWidth="2" />
      <path d="M15.500 21h4V10h3.500l-5.500-7-5.500 7h3.500z" fill={BLUE} stroke={NAVY} />
    </g>
  ),
  removeLayer: (
    <g>
      <path d="M3 3h17v17H3z" fill="#f4f4f4" stroke="#8a9094" strokeWidth="1.500" />
      <rect x="13" y="14" width="11" height="9" rx="2" fill="#e8512f" /><path d="M15 18.500h7" stroke="#fff" strokeWidth="2" />
    </g>
  ),
};

const Icon = ({ name, small }: { name: string; small?: boolean }) => (
  <svg viewBox="0 0 24 24" className={small ? "h-4 w-4 overflow-visible" : "h-6 w-6 overflow-visible"} fill="none" aria-hidden="true">
    {icons[name]}
  </svg>
);

const Logo = () => (
  <svg viewBox="0 0 16 16" className="h-4 w-4 shrink-0" fill="none" aria-hidden="true">
    <circle cx="7.500" cy="7.700" r="5.800" stroke="#589f44" strokeWidth="3.200" />
    <path d="M8 9.500l3-1.500 4.500 5-1.500 2.500h-2.500z" fill="#f6f6f6" />
    <path d="M9 9.500l2.500-1 4 5-2 2z" fill="#6dae45" />
    <circle cx="8" cy="8" r="2.300" fill="#f3b05c" />
    <circle cx="8" cy="8" r="1.400" fill="#ee7913" />
  </svg>
);

/* ---------- controls ---------- */

const Caret = ({ muted = false }: { muted?: boolean }) => (
  <svg viewBox="0 0 8 5" className="h-[5px] w-2" aria-hidden="true">
    <path d="M0 0h8L4 4.500z" fill={muted ? "#a8a8a8" : "#606366"} />
  </svg>
);

type ToolProps = { icon: string; label: string; menu?: boolean; corner?: boolean; pressed?: boolean; muted?: boolean; marked?: boolean };

const Tool = ({ icon, label, menu, corner, pressed, muted, marked }: ToolProps) => (
  <div className="relative flex h-8 shrink-0">
    <button
      type="button"
      aria-label={label}
      disabled={muted}
      className={`relative flex h-8 w-8 items-center justify-center ${pressed ? "rounded-sm border border-[#b4b4b4] bg-[#d9d9d9]" : ""}`}
    >
      <Icon name={icon} />
      {corner && (
        <svg viewBox="0 0 6 3" className="absolute right-0 bottom-0.5 h-[3px] w-1.5" aria-hidden="true">
          <path d="M0 0h6L3 3z" fill={muted ? "#a8a8a8" : "#606366"} />
        </svg>
      )}
    </button>
    {menu && (
      <button
        type="button"
        aria-label={`${label} options`}
        className={`flex h-8 w-3 items-center justify-center ${pressed ? "rounded-sm border border-[#b4b4b4] bg-[#d9d9d9]" : ""}`}
      >
        <Caret muted={muted} />
      </button>
    )}
    {marked && <span className="pointer-events-none absolute -inset-x-[3px] -inset-y-0.5 border-2 border-[#e8190c]" />}
  </div>
);

const Grip = ({ first }: { first?: boolean }) => (
  <div className={`flex h-5 shrink-0 justify-end ${first ? "w-3 pr-[3px]" : "w-[15px] pr-0.5"}`}>
    <svg viewBox="0 0 5 20" className="h-5 w-[5px]" aria-hidden="true">
      <path d="M.5 1v19M3.500 2v18" stroke="#b0b0b0" strokeDasharray="1 2" />
    </svg>
  </div>
);

const Bar = ({ label, children }: { label: string; children: ReactNode }) => (
  <div
    role="toolbar"
    aria-label={label}
    className="flex h-[39px] shrink-0 items-center gap-px overflow-hidden border-b border-[#b5b7b7] bg-linear-to-b from-[#fafafa] to-[#efefef]"
  >
    {children}
  </div>
);

const Tools = ({ items }: { items: ToolProps[] }) => (
  <>
    {items.map((t) => (
      <Tool key={t.icon} {...t} />
    ))}
  </>
);

const Spin = ({ label, value, width, muted }: { label: string; value: string; width: string; muted?: boolean }) => (
  <div className={`flex h-[22px] shrink-0 overflow-hidden rounded-sm border border-[#aeb0b0] ${width} ${muted ? "bg-[#efefef] text-[#8a8a8a]" : "bg-white"}`}>
    <input aria-label={label} defaultValue={value} disabled={muted} className="w-0 flex-1 bg-transparent px-1 outline-none" />
    <div className="flex w-3.5 flex-col items-center justify-center gap-1 border-l border-[#c4c6c6] bg-[#f6f6f6]">
      <button type="button" aria-label={`Increase ${label}`} className="rotate-180"><Caret muted={muted} /></button>
      <button type="button" aria-label={`Decrease ${label}`}><Caret muted={muted} /></button>
    </div>
  </div>
);

const Check = ({ id }: { id: string }) => (
  <span className="relative flex h-3.5 w-3.5 shrink-0">
    <input id={id} type="checkbox" defaultChecked className="peer h-3.5 w-3.5 appearance-none border border-[#b5b5b5] bg-white" />
    <svg viewBox="0 0 14 14" className="pointer-events-none absolute inset-0 hidden h-3.5 w-3.5 peer-checked:block" fill="none" aria-hidden="true">
      <path d="M3.500 7l2.500 3.500 4.500-7" stroke="#000" strokeWidth="1.800" />
    </svg>
  </span>
);

/* ---------- data ---------- */

const menus: [string, string, string][] = [
  ["Pro", "j", "ect"], ["", "E", "dit"], ["", "V", "iew"], ["", "L", "ayer"], ["", "S", "ettings"], ["", "P", "lugins"],
  ["Vect", "o", "r"], ["", "R", "aster"], ["", "W", "eb"], ["", "M", "esh"], ["Pro", "c", "essing"], ["", "H", "elp"],
];

const fileTools: ToolProps[] = [
  { icon: "new", label: "New project" }, { icon: "open", label: "Open project" }, { icon: "save", label: "Save project" },
  { icon: "layout", label: "New print layout" }, { icon: "layoutManager", label: "Layout manager" }, { icon: "style", label: "Style manager" },
];
const infoTools: ToolProps[] = [
  { icon: "identify", label: "Identify features" }, { icon: "abacus", label: "Field calculator" }, { icon: "gear", label: "Processing toolbox" },
  { icon: "sigma", label: "Statistical summary" }, { icon: "table", label: "Attribute table", menu: true }, { icon: "measure", label: "Measure", menu: true },
  { icon: "tip", label: "Map tips" }, { icon: "action", label: "Run action", menu: true },
];
const navTools: ToolProps[] = [
  { icon: "pan", label: "Pan map" }, { icon: "panSel", label: "Pan to selection" }, { icon: "zoomIn", label: "Zoom in" }, { icon: "zoomOut", label: "Zoom out" },
  { icon: "zoomFull", label: "Zoom full" }, { icon: "zoomSel", label: "Zoom to selection" }, { icon: "zoomLayer", label: "Zoom to layer" },
  { icon: "zoomNative", label: "Zoom to native resolution", muted: true }, { icon: "zoomLast", label: "Zoom last" }, { icon: "zoomNext", label: "Zoom next", muted: true },
  { icon: "newMap", label: "New map view" }, { icon: "new3d", label: "New 3D map view" }, { icon: "bookmarkNew", label: "New bookmark" },
  { icon: "bookmarks", label: "Show bookmarks" }, { icon: "clock", label: "Temporal controller" }, { icon: "refresh", label: "Refresh" },
];
const webTools: ToolProps[] = [
  { icon: "globeAdd", label: "Add web service", corner: true }, { icon: "globeSearch", label: "Search web service" }, { icon: "globeFind", label: "Metasearch" },
];
const sourceTools: ToolProps[] = [
  { icon: "dataSource", label: "Data source manager" }, { icon: "geopackage", label: "New GeoPackage layer" }, { icon: "shapefile", label: "New shapefile layer" },
  { icon: "spatialite", label: "New SpatiaLite layer" }, { icon: "memory", label: "New scratch layer" }, { icon: "mesh", label: "New mesh layer" }, { icon: "vtile", label: "New virtual layer" },
];
const selectTools: ToolProps[] = [
  { icon: "select", label: "Select features", menu: true }, { icon: "selectForm", label: "Select by value", menu: true },
  { icon: "deselect", label: "Deselect features", menu: true }, { icon: "selectLoc", label: "Select by location" },
];
const snapTools: ToolProps[] = [
  { icon: "magnet", label: "Enable snapping" }, { icon: "snapType", label: "Snapping mode", muted: true, corner: true },
  { icon: "snapVertex", label: "Snapping type", muted: true, pressed: true, corner: true },
];
const topoTools: ToolProps[] = [
  { icon: "topology", label: "Topological editing" }, { icon: "overlap", label: "Avoid overlap", corner: true }, { icon: "intersect", label: "Snap on intersection", muted: true },
  { icon: "selfSnap", label: "Self-snapping", muted: true, menu: true }, { icon: "trace", label: "Tracing", muted: true },
];
const editTools: ToolProps[] = [
  { icon: "edits", label: "Current edits", corner: true }, { icon: "toggleEdit", label: "Toggle editing", pressed: true }, { icon: "saveEdits", label: "Save layer edits" },
  { icon: "segment", label: "Digitize with segment", pressed: true, menu: true }, { icon: "addPolygon", label: "Add polygon feature" },
  { icon: "vertexTool", label: "Vertex tool", menu: true }, { icon: "modifyAttr", label: "Modify attributes" }, { icon: "trash", label: "Delete selected" },
  { icon: "cut", label: "Cut features" }, { icon: "copy", label: "Copy features" }, { icon: "paste", label: "Paste features" },
  { icon: "undo", label: "Undo", muted: true }, { icon: "redo", label: "Redo", muted: true },
];
const shapeTools: ToolProps[] = [
  { icon: "advanced", label: "Advanced digitizing" }, { icon: "move", label: "Move feature", menu: true }, { icon: "rotate", label: "Rotate feature" },
  { icon: "scale", label: "Scale feature" }, { icon: "simplify", label: "Simplify feature" }, { icon: "addRing", label: "Add ring" }, { icon: "addPart", label: "Add part" },
  { icon: "fillRing", label: "Fill ring", pressed: true, marked: true }, { icon: "deleteRing", label: "Delete ring" }, { icon: "deletePart", label: "Delete part" },
  { icon: "reshape", label: "Reshape features" }, { icon: "offset", label: "Offset curve" }, { icon: "reverse", label: "Reverse line", muted: true },
  { icon: "trim", label: "Trim or extend" }, { icon: "splitFeat", label: "Split features" }, { icon: "splitPart", label: "Split parts", muted: true },
  { icon: "merge", label: "Merge features" }, { icon: "mergeAttr", label: "Merge attributes" }, { icon: "rotateSym", label: "Rotate point symbols", muted: true, menu: true },
];
const dock: { icon: string; label: string; menu?: boolean }[] = [
  { icon: "addVector", label: "Add vector layer" }, { icon: "addRaster", label: "Add raster layer" }, { icon: "addMesh", label: "Add mesh layer" },
  { icon: "addCsv", label: "Add delimited text layer" }, { icon: "addSpatialite", label: "Add SpatiaLite layer" }, { icon: "addVtile", label: "Add virtual layer" },
  { icon: "addPostgis", label: "Add PostGIS layer", menu: true }, { icon: "addWms", label: "Add WMS layer" }, { icon: "addWcs", label: "Add WCS layer" },
  { icon: "addWfs", label: "Add WFS layer" }, { icon: "shapefile", label: "New vector layer", menu: true },
];
const panelTools: { icon: string; label: string; menu?: boolean; corner?: boolean }[] = [
  { icon: "brush", label: "Layer styling" }, { icon: "addGroup", label: "Add group" }, { icon: "eye", label: "Map themes", corner: true },
  { icon: "filter", label: "Filter legend", corner: true }, { icon: "epsilon", label: "Filter by expression", menu: true },
  { icon: "expand", label: "Expand all" }, { icon: "collapse", label: "Collapse all" }, { icon: "removeLayer", label: "Remove layer" },
];

/* ---------- page regions ---------- */

const LayersPanel = () => (
  <section className="flex w-[252px] shrink-0 flex-col border-l border-[#b5b7b7] font-['Noto_Sans',sans-serif] text-[12px]" aria-label="Layers">
    <header className="flex h-5 items-center justify-between pr-0.5 pl-[3px]">
      <h2>Layers</h2>
      <div className="flex gap-0.5">
        <button type="button" aria-label="Float panel">
          <svg viewBox="0 0 12 12" className="h-3 w-3" fill="none" stroke="#555"><rect x=".5" y=".5" width="11" height="11" rx="2" /><rect x="4.500" y="2.500" width="5" height="5" rx="1" /><rect x="2.500" y="4.500" width="5" height="5" rx="1" fill="#f0f0f0" /></svg>
        </button>
        <button type="button" aria-label="Close panel">
          <svg viewBox="0 0 12 12" className="h-3 w-3" fill="none" stroke="#555"><rect x=".5" y=".5" width="11" height="11" rx="2" /><path d="M3 3l6 6M9 3l-6 6" strokeWidth="2" /></svg>
        </button>
      </div>
    </header>
    <div className="flex h-[30px] items-center pl-0.5">
      {panelTools.map((t) => (
        <div key={t.icon} className="flex items-center">
          <button type="button" aria-label={t.label} className="relative flex h-6 w-[25px] items-center justify-center">
            <Icon name={t.icon} small />
            {t.corner && (
              <svg viewBox="0 0 6 3" className="absolute right-0.5 bottom-0.5 h-[3px] w-1.5" aria-hidden="true"><path d="M0 0h6L3 3z" fill="#606366" /></svg>
            )}
          </button>
          {t.menu && <button type="button" aria-label={`${t.label} options`} className="flex w-3 justify-center"><Caret /></button>}
        </div>
      ))}
    </div>
    <ul className="flex-1 border border-l-0 border-[#b5b7b7] bg-white font-bold">
      <li className="flex h-[19px] items-center gap-[7px] pl-[23px]">
        <Check id="layer-gda02" />
        <svg viewBox="0 0 14 14" className="h-3.5 w-3.5" aria-hidden="true"><circle cx="7" cy="7" r="6" fill="#cfc8c8" stroke="#7890a8" strokeWidth="1.500" /><path d="M5 4h1M8 5h1M4 7h1M7 8h1M9 9h1M6 10h1" stroke="#e58a80" /></svg>
        <label htmlFor="layer-gda02">New gda02</label>
      </li>
      <li className="flex h-[19px] items-center gap-1.5 pl-[23px]">
        <Check id="layer-gda01" />
        <svg viewBox="0 0 14 14" className="h-3.5 w-3.5" aria-hidden="true"><path d="M0 7h14" stroke="#5a9e4b" strokeWidth="2" /></svg>
        <label htmlFor="layer-gda01">New gda01</label>
      </li>
      <li className="flex h-[19px] items-center gap-1.5 bg-[#f0f0f0] pl-[23px]">
        <Check id="layer-gda" />
        <svg viewBox="0 0 16 16" className="h-4 w-4" aria-hidden="true"><path d="M.5.500h15v15H.5z" fill="#e66e36" stroke="#b5613a" /><path d="M4 13l1-4 5-6 2 1.500-5 6z" fill="#e8875a" stroke="#a9a39c" /><path d="M10 3l2 1.500M4 13l1-3 1.500 1z" stroke="#ddd" strokeWidth="1.500" /></svg>
        <label htmlFor="layer-gda" className="underline">New gda</label>
      </li>
    </ul>
  </section>
);

const ClearIcon = () => (
  <svg viewBox="0 0 13 10" className="h-2.5 w-[13px]" fill="none"><path d="M4 0h9v10H4L0 5z" fill="#8f8f8f" /><path d="M5.500 2.500l5 5M10.500 2.500l-5 5" stroke="#fff" strokeWidth="1.200" /></svg>
);

const Field = ({ id, value, children, end }: { id: string; value: string; children?: ReactNode; end: string }) => (
  <div className={`flex items-center pl-[18px] ${end}`}>
    <label htmlFor={id} className="w-[30px] shrink-0">{id}</label>
    <div className="flex h-[22px] flex-1 items-center rounded-sm border border-[#a6a8a8] bg-white pr-2">
      <input id={id} defaultValue={value} className="w-0 flex-1 bg-transparent pl-0.5 outline-none" />
      <button type="button" aria-label={`Clear ${id}`}><ClearIcon /></button>
    </div>
    {children}
  </div>
);

const AttributesDialog = () => (
  <form
    role="dialog"
    aria-label="New gda - Feature Attributes"
    className="absolute top-[3px] right-[23px] bottom-1.5 flex w-[554px] flex-col border border-[#a9abab] bg-[#f0f0f0]"
    onSubmit={(e) => e.preventDefault()}
  >
    <header className="flex h-[30px] shrink-0 items-center gap-[5px] bg-white pr-2 pl-2 font-['Noto_Sans',sans-serif] text-[12px] text-[#949494]">
      <Logo />
      <h2 className="flex-1">New gda - Feature Attributes</h2>
      <button type="button" aria-label="Close dialog">
        <svg viewBox="0 0 14 14" className="h-3.5 w-3.5" stroke="#999"><path d="M2 2l10 10M12 2L2 12" /></svg>
      </button>
    </header>
    <div className="flex flex-1 flex-col gap-1.5 pt-[18px]">
      <Field id="fid" value="04" end="pr-[18px]">
        <svg viewBox="0 0 12 12" className="ml-1.5 h-3 w-3" fill="none" aria-hidden="true"><path d="M1.500 5.500l2 3 6.500-7" stroke="#4c9a3b" strokeWidth="2.300" /></svg>
      </Field>
      <Field id="name" value="four" end="pr-[30px]" />
    </div>
    <footer className="flex justify-end gap-1.5 pr-[9px] pb-[9px] font-['Noto_Sans_CJK_SC',sans-serif] text-[12px]">
      <button type="submit" className="h-5 w-20 rounded-sm border border-[#a6a8a8] bg-linear-to-b from-white to-[#f2f2f2] leading-4">确定</button>
      <button type="button" className="h-5 w-20 rounded-sm border border-[#a6a8a8] bg-linear-to-b from-white to-[#f2f2f2] leading-4">取消</button>
    </footer>
  </form>
);

const MapCanvas = () => (
  <main className="relative min-w-0 flex-1 overflow-hidden border-t border-r border-b border-l border-[#b5b7b7] bg-white" aria-label="Map">
    <svg viewBox="311 163 640 560" className="absolute top-0 left-0 h-[560px] w-[640px]" fill="none" aria-hidden="true">
      <path d="M450 335L852 265 922 444 692 597.500 452 543.500z" fill="#e66e36" stroke="#2c2c2c" strokeWidth="1.200" />
      <path d="M716 337L768 400 718 444 645 451 620 402z" fill="#f03c30" fillOpacity=".3" stroke="#f5150b" />
      <path d="M640.500 446.500l9 9M649.500 446.500l-9 9" stroke="#3fa83a" strokeWidth="1.700" />
    </svg>
    <AttributesDialog />
    <svg viewBox="311 163 700 240" className="pointer-events-none absolute top-0 left-0 h-[240px] w-[700px]" fill="none" aria-hidden="true">
      <path d="M747 170L722.500 291M914 380L985 290" stroke="#f5150b" strokeWidth="2" />
      <path d="M715.500 289l13.500 2.500-8.500 10zM978.500 286.500l10 8 4.500-13.500z" fill="#f5150b" />
    </svg>
  </main>
);

const StatusBar = () => (
  <footer className="flex h-7 shrink-0 items-center bg-[#f0f0f0] pr-[7px] pl-1">
    <div className="flex h-[22px] w-[244px] shrink-0 items-center gap-1.5 rounded-sm border border-[#a6a8a8] bg-white pl-[7px]">
      <svg viewBox="0 0 14 14" className="h-3.5 w-3.5" fill="none" stroke="#999"><circle cx="5.500" cy="5.500" r="4" strokeWidth="1.400" /><path d="M8.500 8.500l5 5" strokeWidth="2" /></svg>
      <input aria-label="Locate" placeholder="Type to locate (Ctrl+K)" className="w-0 flex-1 bg-transparent outline-none placeholder:text-[#74808a]" />
    </div>
    <p className="flex-1 pl-[9px]">1 feature(s) deleted.</p>
    <div className="flex items-center">
      <label htmlFor="coordinate" className="pr-1">Coordinate</label>
      <input id="coordinate" defaultValue="0.155° ,-0.565°" className="h-[22px] w-[103px] rounded-sm border border-[#a6a8a8] bg-white px-[3px] outline-none" />
      <button type="button" aria-label="Toggle extents" className="px-1">
        <svg viewBox="0 0 16 16" className="h-4 w-4" fill="none" stroke="#444"><ellipse cx="5" cy="5" rx="3" ry="4.500" transform="rotate(-30 5 5)" fill="#ddd" /><ellipse cx="10" cy="11" rx="4.500" ry="3.500" transform="rotate(30 10 11)" fill="#bbb" /><path d="M3 3l5 7M6 2l3 6M1 8l6 2M11 4l3-3M9 7l2-2M3 13l6-3M8 12l4-1M12 9l2 2" strokeWidth="1.400" /></svg>
      </button>
      <label htmlFor="scale" className="pr-[3px] pl-[9px]">Scale</label>
      <div className="relative">
        <select id="scale" className="h-[22px] w-[83px] appearance-none rounded-sm border border-[#a6a8a8] bg-white pl-1 outline-none">
          <option>1:2513274</option>
        </select>
        <span className="pointer-events-none absolute inset-y-px right-px flex w-[19px] items-center justify-center border-l border-[#c4c6c6] bg-[#f6f6f6]"><Caret /></span>
      </div>
      <svg viewBox="0 0 12 16" className="mr-2 ml-3 h-4 w-3" fill="none" aria-hidden="true"><path d="M2.500 8V5a3.500 3.500 0 017 0v3" stroke="#888" strokeWidth="1.500" /><rect x="0" y="7" width="12" height="8" rx="1" fill="#5c6164" /></svg>
      <span className="pr-1">Magnifier</span>
      <Spin label="Magnifier" value="100%" width="w-[89px]" />
      <span className="pr-[9px] pl-[9px]">Rotation</span>
      <Spin label="Rotation" value="0.0 °" width="w-[88px]" />
      <div className="flex items-center gap-1 pr-4 pl-[7px]">
        <Check id="render" />
        <label htmlFor="render">Render</label>
      </div>
      <button type="button" className="flex items-center gap-[3px] pr-7">
        <svg viewBox="0 0 14 14" className="h-3.5 w-3.5" fill="none" stroke="#777"><circle cx="7" cy="6.500" r="6" fill="#aaa" /><path d="M1 6.500h12M2 3.500h10M2 9.500h10M7 .5v12M7 .5C3 4 3 9 7 12.500M7 .5c4 3.500 4 8.500 0 12M4 13.500h6" /></svg>
        EPSG:4326
      </button>
      <button type="button" aria-label="Messages">
        <svg viewBox="0 0 18 16" className="h-4 w-[18px]"><path d="M9 1c5 0 8 2.500 8 6 0 2-1 3.500-2.500 4.500L16 15l-4-2.500C6 13.500 1 11 1 7s3-6 8-6z" fill="#5c6164" /></svg>
      </button>
    </div>
  </footer>
);

export default function App() {
  return (
    <div className="flex h-screen min-h-[640px] flex-col overflow-hidden bg-[#f0f0f0] font-['Liberation_Mono',monospace] text-[10px] text-black">
      <header className="flex h-[23px] shrink-0 items-center gap-1 bg-white pr-[19px] pl-0.5 font-['Noto_Sans',sans-serif] text-[12px] text-[#8f8f8f]">
        <Logo />
        <h1 className="flex-1">*Untitled Project — QGIS</h1>
        <div className="flex items-center gap-[34px]">
          <button type="button" aria-label="Minimize"><svg viewBox="0 0 12 12" className="h-3 w-3" stroke="#888"><path d="M1 6.500h10" /></svg></button>
          <button type="button" aria-label="Restore"><svg viewBox="0 0 12 12" className="h-3 w-3" fill="none" stroke="#888"><path d="M1.500 3.500h7v7h-7zM3.500 3.500v-2h7v7h-2" /></svg></button>
          <button type="button" aria-label="Close"><svg viewBox="0 0 12 12" className="h-3 w-3" stroke="#888"><path d="M1 1l10 10M11 1L1 11" /></svg></button>
        </div>
      </header>
      <nav className="flex h-[22px] shrink-0 items-center gap-[15px] border-b border-[#d6d6d6] pl-2.5 font-['Noto_Sans',sans-serif] text-[12px] text-[#8f8f8f]">
        {menus.map(([before, key, after]) => (
          <button key={before + key + after} type="button">
            {before}
            <span className="underline underline-offset-2">{key}</span>
            {after}
          </button>
        ))}
      </nav>

      <Bar label="Project and navigation">
        <Grip first />
        <Tools items={fileTools} />
        <Grip />
        <Tools items={infoTools} />
        <Grip />
        <Tools items={navTools} />
        <Grip />
        <Tools items={webTools} />
      </Bar>
      <Bar label="Sources, selection and snapping">
        <Grip first />
        <Tools items={sourceTools} />
        <Grip />
        <Tools items={selectTools} />
        <Grip />
        <Tools items={snapTools} />
        <Spin label="Snapping tolerance" value="12" width="w-[89px]" muted />
        <div className="relative">
          <select aria-label="Tolerance unit" disabled className="h-[22px] w-[83px] appearance-none rounded-sm border border-[#c4c6c6] bg-[#f6f6f6] pl-1 text-[#8a8a8a]">
            <option>px</option>
          </select>
          <span className="pointer-events-none absolute inset-y-0 right-[7px] flex items-center"><Caret muted /></span>
        </div>
        <Tools items={topoTools} />
      </Bar>
      <Bar label="Digitizing">
        <Grip first />
        <Tools items={editTools} />
        <Grip />
        <Tools items={shapeTools} />
      </Bar>

      <div className="flex min-h-0 flex-1">
        <aside className="flex w-[52px] shrink-0 flex-col bg-linear-to-r from-[#fafafa] to-[#efefef] pl-1" aria-label="Manage layers">
          <div className="flex h-3 items-center pl-3.5">
            <svg viewBox="0 0 18 5" className="h-[5px] w-[18px]" aria-hidden="true"><path d="M1 .5h17M2 3.500h16" stroke="#b0b0b0" strokeDasharray="1 2" /></svg>
          </div>
          {dock.map((t) => (
            <div key={t.label} className="flex h-8 shrink-0">
              <button type="button" aria-label={t.label} className="flex h-8 w-8 items-center justify-center"><Icon name={t.icon} /></button>
              {t.menu && <button type="button" aria-label={`${t.label} options`} className="flex h-8 w-3 items-center justify-center"><Caret /></button>}
            </div>
          ))}
        </aside>
        <LayersPanel />
        <div className="flex w-1.5 shrink-0 items-center justify-center">
          <svg viewBox="0 0 3 18" className="h-[18px] w-[3px]" aria-hidden="true"><path d="M.5 0v18M2.500 1v17" stroke="#bcbcbc" strokeDasharray="1 2" /></svg>
        </div>
        <MapCanvas />
      </div>
      <StatusBar />
    </div>
  );
}
